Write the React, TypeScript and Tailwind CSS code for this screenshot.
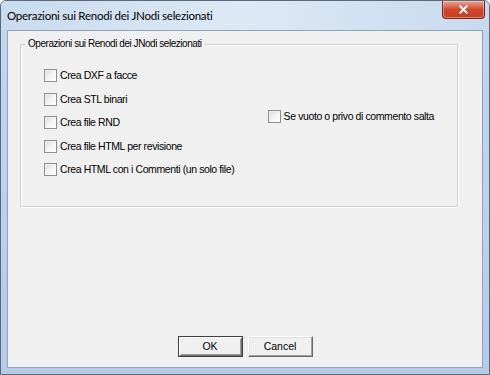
import { X } from 'lucide-react';

const leftOptions = [
  'Crea DXF a facce',
  'Crea STL binari',
  'Crea file RND',
  'Crea file HTML per revisione',
  'Crea HTML con i Commenti (un solo file)',
];

function CheckBox({ label }: { label: string }) {
  return (
    <label className="flex items-center h-[13px] gap-[3px] cursor-default">
      <span className="w-[13px] h-[13px] shrink-0 border border-[#8e8f8f] bg-gradient-to-br from-[#d8d8d8] via-[#f4f4f4] to-white shadow-[inset_1px_1px_0_#f0f0f0]" />
      <span className="text-[10.5px] tracking-[-0.4px] leading-none text-[#000] whitespace-nowrap">{label}</span>
    </label>
  );
}

function Button({ label, isDefault }: { label: string; isDefault?: boolean }) {
  return (
    <button
      className={
        'w-[65px] h-[21px] text-[10.5px] text-black bg-[#f0f0f0] ' +
        (isDefault
          ? 'border border-[#404040] shadow-[inset_1px_1px_0_#ffffff,inset_-1px_-1px_0_#696969,inset_2px_2px_0_#f0f0f0,inset_-2px_-2px_0_#a0a0a0]'
          : 'border-t border-l border-t-white border-l-white border-b border-r border-b-[#696969] border-r-[#696969] shadow-[inset_-1px_-1px_0_#a0a0a0,inset_1px_1px_0_#e3e3e3]')
      }
    >
      {label}
    </button>
  );
}

export default function App() {
  return (
    <div className="w-[490px] h-[375px] flex flex-col border border-[#5a6a7e] rounded-t-[6px] bg-gradient-to-b from-[#c2d6ec] via-[#bdd3ea] to-[#b5cbe6] overflow-hidden font-['Liberation_Sans',sans-serif]">
      {/* title bar */}
      <div className="h-[29px] flex items-start justify-between shrink-0 bg-gradient-to-r from-[#c9dbee] via-[#dde9f5] to-[#c7daee]">
        <span className="pl-[6px] pt-[6px] text-[11.5px] tracking-[-0.25px] text-black font-['Lato',sans-serif]">
          Operazioni sui Renodi dei JNodi selezionati
        </span>
        <div className="mr-[4px] w-[43px] h-[18px] flex items-center justify-center rounded-b-[4px] border border-t-0 border-[#6d2a22] bg-gradient-to-b from-[#e8a493] via-[#d2452c] to-[#c93e22] shadow-[inset_0_0_0_1px_rgba(255,255,255,0.35)]">
          <X size={13} strokeWidth={3.5} className="text-white" />
        </div>
      </div>

      {/* client area */}
      <div className="flex-1 mx-[6px] mb-[6px] flex flex-col bg-[#f0f0f0] border border-[#8ea3bc]">
        <fieldset className="min-w-0 ml-[12px] mr-[24px] mt-[8px] h-[168px] border border-[#d0d0d0] shadow-[inset_1px_1px_0_#ffffff,1px_1px_0_#ffffff] px-[23px]">
          <legend className="ml-[-18px] px-[2px] text-[10px] tracking-[-0.45px] text-black leading-none">
            Operazioni sui Renodi dei JNodi selezionati
          </legend>
          <div className="flex pt-[20px]">
            <div className="flex flex-col gap-[10.5px] w-[230px]">
              {leftOptions.map((o) => (
                <CheckBox key={o} label={o} />
              ))}
            </div>
            <div className="pt-[41px]">
              <CheckBox label="Se vuoto o privo di commento salta" />
            </div>
          </div>
        </fieldset>
        <div className="mt-auto mb-[10px] flex justify-center gap-[5px]">
          <Button label="OK" isDefault />
          <Button label="Cancel" />
        </div>
      </div>
    </div>
  );
}
